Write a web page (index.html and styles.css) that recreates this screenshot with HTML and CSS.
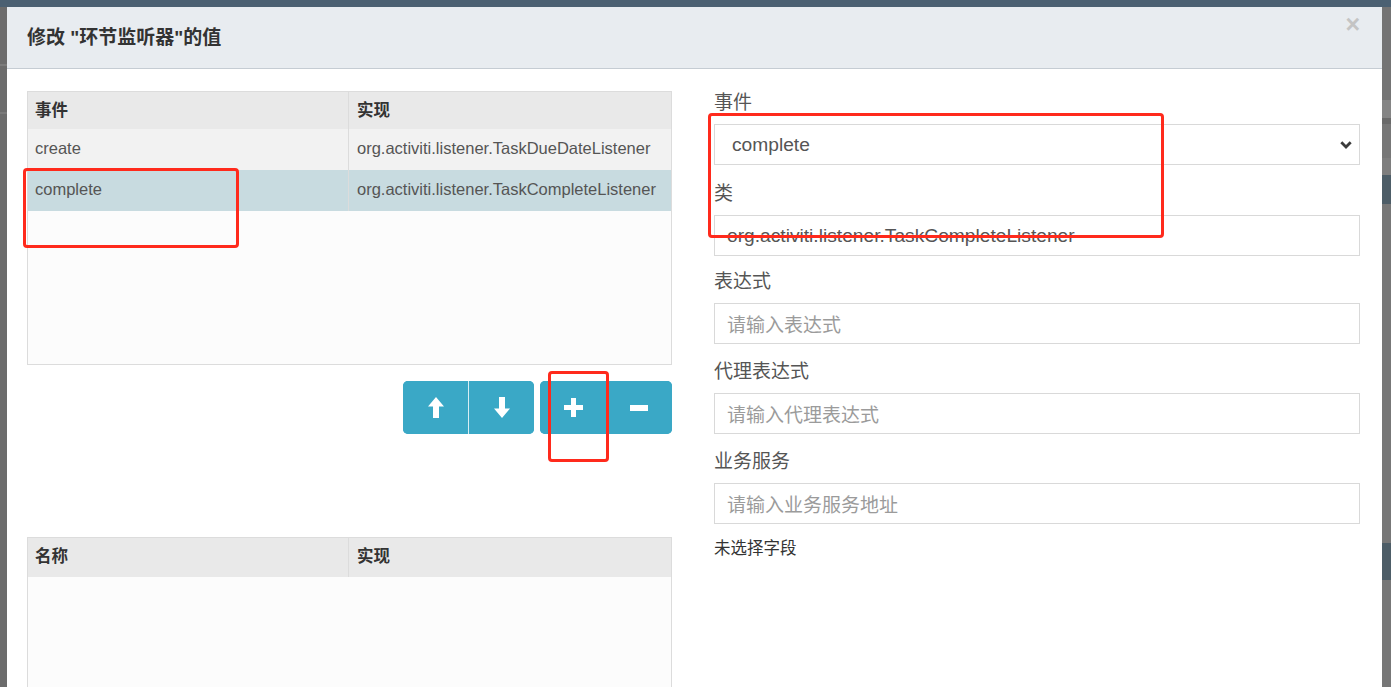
FILE: index.html
```html
<!DOCTYPE html>
<html lang="zh-CN">
<head>
<meta charset="utf-8">
<title>修改环节监听器</title>
<link rel="stylesheet" href="styles.css">
</head>
<body>
<div class="backdrop-right"></div>
<div class="modal">
  <div class="modal-header">
    <h4 class="modal-title">修改 "环节监听器"的值</h4>
    <span class="close">×</span>
  </div>
  <div class="modal-body">
    <div class="col-left">
      <div class="grid-table listeners">
        <div class="grid-head">
          <div class="cell">事件</div>
          <div class="cell">实现</div>
        </div>
        <div class="grid-row">
          <div class="cell">create</div>
          <div class="cell">org.activiti.listener.TaskDueDateListener</div>
        </div>
        <div class="grid-row selected">
          <div class="cell">complete</div>
          <div class="cell">org.activiti.listener.TaskCompleteListener</div>
        </div>
      </div>
      <div class="btn-bar">
        <div class="btn-group">
          <button class="btn divided" type="button" aria-label="上移">
            <svg width="16" height="21" viewBox="0 0 16 21"><path d="M8 0 L16 9.5 L11 9.5 L11 21 L5 21 L5 9.5 L0 9.5 Z" fill="#fff"/></svg>
          </button>
          <button class="btn" type="button" aria-label="下移">
            <svg width="16" height="21" viewBox="0 0 16 21"><path d="M8 21 L16 11.5 L11 11.5 L11 0 L5 0 L5 11.5 L0 11.5 Z" fill="#fff"/></svg>
          </button>
        </div>
        <div class="btn-group">
          <button class="btn wide" type="button" aria-label="新增">
            <svg width="19" height="19" viewBox="0 0 19 19"><path d="M7 0 H12 V7 H19 V12 H12 V19 H7 V12 H0 V7 H7 Z" fill="#fff"/></svg>
          </button>
          <button class="btn wide" type="button" aria-label="删除">
            <svg width="18" height="6" viewBox="0 0 18 6"><rect width="18" height="6" fill="#fff"/></svg>
          </button>
        </div>
      </div>
      <div class="grid-table fields">
        <div class="grid-head tall">
          <div class="cell">名称</div>
          <div class="cell">实现</div>
        </div>
      </div>
    </div>
    <div class="col-right">
      <div class="form-group">
        <label class="form-label">事件</label>
        <div class="select">
          <span>complete</span>
          <svg width="12" height="8" viewBox="0 0 12 8"><path d="M1.3 1.3 L6 6 L10.7 1.3" fill="none" stroke="#3c3c3c" stroke-width="2.8"/></svg>
        </div>
      </div>
      <div class="form-group">
        <label class="form-label">类</label>
        <div class="input">org.activiti.listener.TaskCompleteListener</div>
      </div>
      <div class="form-group">
        <label class="form-label">表达式</label>
        <div class="input placeholder">请输入表达式</div>
      </div>
      <div class="form-group">
        <label class="form-label">代理表达式</label>
        <div class="input placeholder">请输入代理表达式</div>
      </div>
      <div class="form-group">
        <label class="form-label">业务服务</label>
        <div class="input placeholder">请输入业务服务地址</div>
      </div>
      <div class="note">未选择字段</div>
    </div>
  </div>
</div>
<div class="mark mark-row"></div>
<div class="mark mark-add"></div>
<div class="mark mark-form"></div>
</body>
</html>
```

FILE: styles.css
```css
* { box-sizing: border-box; }

html, body {
  margin: 0;
  width: 1391px;
  height: 687px;
  overflow: hidden;
}

body {
  position: relative;
  font-family: "Liberation Sans", "Noto Sans CJK SC", sans-serif;
  color: #333;
  padding: 7px 9px 0 7px;
  background:
    linear-gradient(to bottom, #4b6072 0 7px, transparent 7px),
    linear-gradient(to bottom, transparent 64px, #7c7c7c 64px 66px, transparent 66px 112px, #7a7a7a 112px 114px, transparent 114px),
    #6c6c6c;
}

.backdrop-right {
  position: absolute;
  left: 1382px;
  top: 0;
  width: 9px;
  height: 687px;
  background: linear-gradient(to bottom,
    #4b6072 0 7px,
    #747474 7px 100px,
    #858585 100px 118px,
    #6a6a6a 118px 124px,
    #777 124px 158px,
    #7e7e7e 158px 175px,
    #4d5d67 175px 204px,
    #777 204px 543px,
    #4d5d67 543px 580px,
    #777 580px);
}

.modal {
  position: relative;
  width: 1375px;
  height: 690px;
  background: #fff;
}

.modal-header {
  height: 62px;
  background: #e8ecf0;
  border-bottom: 1px solid #c5ccd3;
  display: flex;
  align-items: center;
  justify-content: space-between;
  padding: 0 22px 0 20px;
}

.modal-title {
  margin: 0;
  font-size: 19px;
  font-weight: bold;
  line-height: 24px;
  padding-top: 1px;
  color: #333;
}

.close {
  align-self: flex-start;
  margin-top: 7px;
  font-size: 25px;
  font-weight: bold;
  line-height: 20px;
  color: #c4c4c4;
}

.modal-body {
  display: grid;
  grid-template-columns: 645px 646px;
  column-gap: 42px;
  padding: 22px 22px 0 20px;
}

/* tables */
.grid-table {
  border: 1px solid #dcdcdc;
  background: #fcfcfc;
  font-size: 16.5px;
}

.listeners { height: 274px; }
.fields { height: 200px; margin-top: 103px; }

.grid-head, .grid-row {
  display: grid;
  grid-template-columns: 320px 1fr;
}

.grid-head {
  height: 37px;
  background: #e9e9e9;
  font-weight: bold;
  color: #333;
}

.grid-head .cell { padding-bottom: 4px; }

.grid-head.tall { height: 39px; }
.grid-head.tall .cell { padding-bottom: 5px; }

.grid-row {
  height: 41px;
  background: #f2f2f2;
  color: #555;
}

.grid-row .cell { padding-bottom: 2px; }

.grid-row.selected { background: #c8dbe0; }

.cell {
  display: flex;
  align-items: center;
  padding-left: 7px;
  white-space: nowrap;
  overflow: hidden;
}

.cell + .cell {
  border-left: 1px solid #dcdcdc;
  padding-left: 8px;
}

/* buttons */
.btn-bar {
  display: flex;
  justify-content: flex-end;
  gap: 6px;
  margin-top: 16px;
}

.btn-group {
  display: flex;
  border-radius: 5px;
  overflow: hidden;
  background: #3aa8c6;
}

.btn {
  width: 65px;
  height: 53px;
  border: 0;
  padding: 0;
  margin: 0;
  background: #3aa8c6;
  display: flex;
  align-items: center;
  justify-content: center;
}

.btn.divided { border-right: 1px solid #d7eef4; width: 66px; }
.btn.wide { width: 66px; }

/* form */
.form-group {
  margin-bottom: 16px;
}

.form-group:first-child { margin-bottom: 17px; }
.form-group:nth-child(2) { margin-bottom: 14px; }

.form-label {
  display: block;
  font-size: 19px;
  line-height: 24px;
  color: #555;
  margin-bottom: 9px;
}

.select, .input {
  height: 41px;
  border: 1px solid #d9d9d9;
  background: #fff;
  font-size: 19.2px;
  color: #555;
  display: flex;
  align-items: center;
  white-space: nowrap;
}

.select {
  justify-content: space-between;
  padding: 0 7px 0 17px;
}

.input { padding: 0 12px; }
.input.placeholder { color: #9b9b9b; font-size: 19px; }

.note {
  font-size: 16.5px;
  line-height: 18px;
  margin-top: -1px;
  color: #333;
}

/* red annotation marks */
.mark {
  position: absolute;
  border: 3px solid #ff2a1c;
  border-radius: 4px;
}

.mark-row { left: 23px; top: 168px; width: 216px; height: 80px; }
.mark-add { left: 548px; top: 371px; width: 61px; height: 91px; }
.mark-form { left: 708px; top: 113px; width: 456px; height: 125px; }
```
